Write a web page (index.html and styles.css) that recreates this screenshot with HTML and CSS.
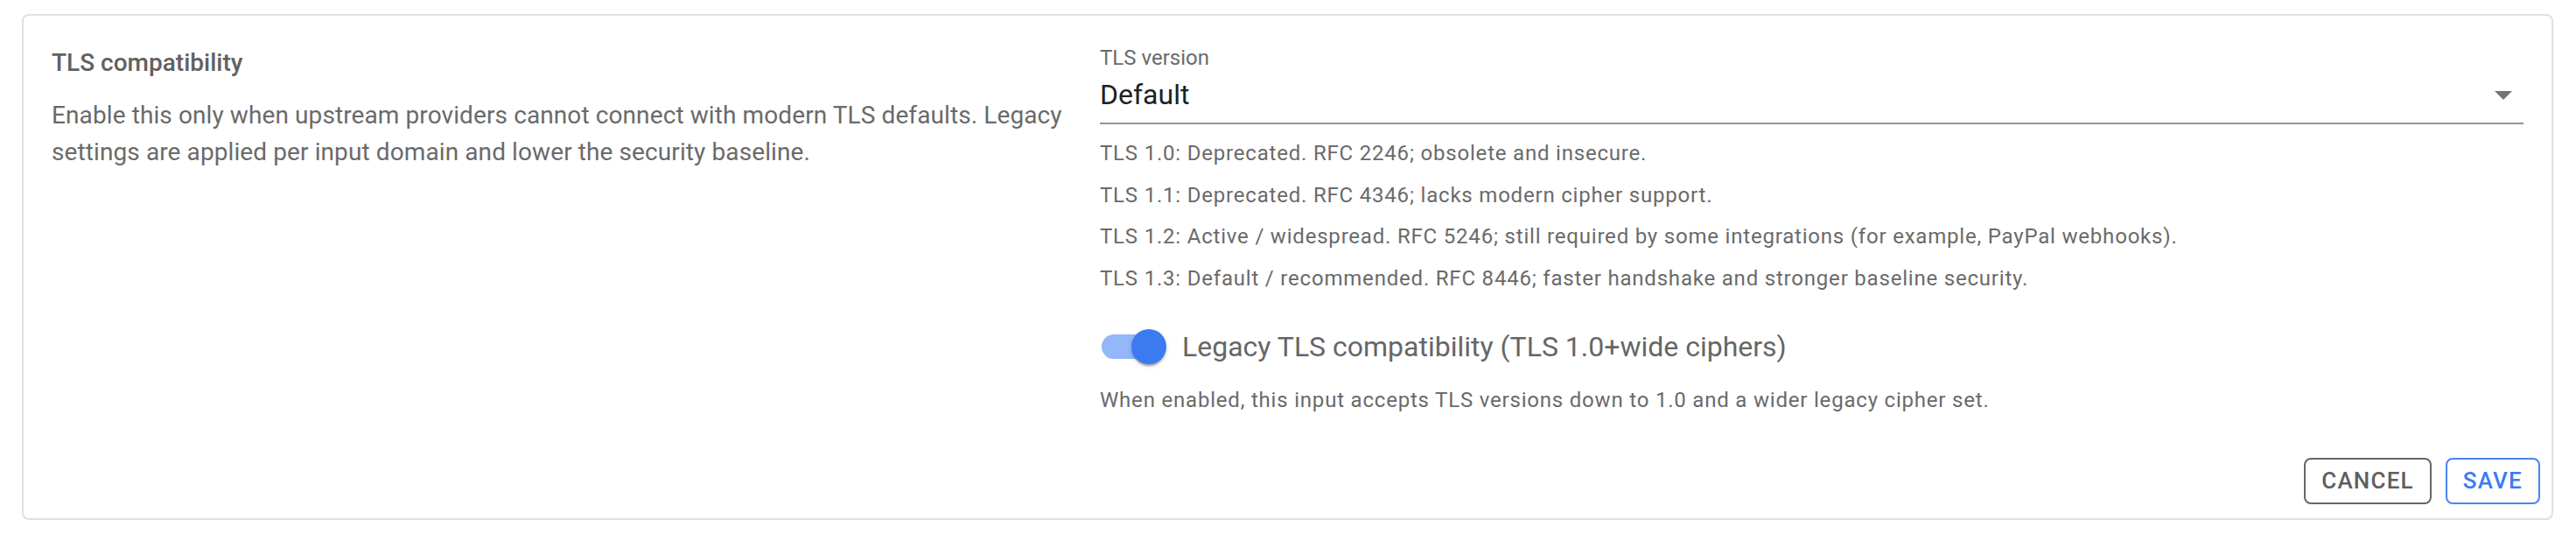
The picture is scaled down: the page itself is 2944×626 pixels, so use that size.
FILE: index.html
```html
<!DOCTYPE html>
<html lang="en">
<head>
  <meta charset="UTF-8" />
  <title>TLS compatibility</title>
  <link rel="stylesheet" href="styles.css">
</head>
<body>

<div class="card">
  <div class="card-content">
    <!-- Left: section intro -->
    <div class="intro">
      <div class="intro-title">TLS compatibility</div>
      <p class="intro-text">Enable this only when upstream providers cannot connect with modern TLS defaults. Legacy settings are applied per input domain and lower the security baseline.</p>
    </div>

    <!-- Right: the settings -->
    <div class="settings">
      <div class="field-label">TLS version</div>
      <div class="select">
        <span class="select-value">Default</span>
        <svg class="select-arrow" viewBox="0 0 24 24" width="48" height="48"><path d="M7 10l5 5 5-5z" fill="currentColor"/></svg>
      </div>

      <div class="helper-list">
        <div class="helper">TLS 1.0: Deprecated. RFC 2246; obsolete and insecure.</div>
        <div class="helper">TLS 1.1: Deprecated. RFC 4346; lacks modern cipher support.</div>
        <div class="helper">TLS 1.2: Active / widespread. RFC 5246; still required by some integrations (for example, PayPal webhooks).</div>
        <div class="helper">TLS 1.3: Default / recommended. RFC 8446; faster handshake and stronger baseline security.</div>
      </div>

      <label class="switch-row">
        <span class="switch">
          <span class="switch-track"></span>
          <span class="switch-thumb"></span>
        </span>
        <span class="switch-label">Legacy TLS compatibility (TLS 1.0+wide ciphers)</span>
      </label>
      <div class="helper switch-helper">When enabled, this input accepts TLS versions down to 1.0 and a wider legacy cipher set.</div>
    </div>
  </div>

  <div class="card-actions">
    <button class="btn btn-cancel">Cancel</button>
    <button class="btn btn-save">Save</button>
  </div>
</div>

</body>
</html>
```

FILE: styles.css
```css
body {
  margin: 16px 26px 0 25px;
  background: #fff;
  font-family: Roboto, "Noto Sans", sans-serif;
}
.card {
  border: 2px solid #e0e0e0;
  border-radius: 8px;
  background: #fff;
}
.card-content {
  display: grid;
  grid-template-columns: 1186px 1fr;
  column-gap: 12px;
  padding: 32px 32px 30px 32px;
}
.intro-title {
  font-size: 28px;
  font-weight: 500;
  line-height: 44px;
  color: #616161;
}
.intro-text {
  margin: 17px 0 0;
  font-size: 28px;
  line-height: 42px;
  letter-spacing: 0.1px;
  color: #6a6a6a;
}
.field-label {
  margin-top: 2px;
  font-size: 24px;
  line-height: 28px;
  color: #6a6a6a;
}
.select {
  display: flex;
  align-items: center;
  justify-content: space-between;
  margin-top: 4px;
  padding-bottom: 8px;
  border-bottom: 2px solid #949494;
}
.select-value {
  font-size: 32px;
  line-height: 46px;
  color: #212121;
}
.select-arrow {
  color: #757575;
  margin-right: -1px;
}
.helper-list {
  margin-top: 13px;
}
.helper {
  font-size: 24px;
  line-height: 40px;
  letter-spacing: 0.8px;
  color: #6a6a6a;
}
.helper + .helper {
  margin-top: 7.5px;
}
.switch-row {
  display: flex;
  align-items: center;
  margin: 20px 0 0 -22px;
}
.switch {
  position: relative;
  width: 116px;
  height: 76px;
  flex-shrink: 0;
}
.switch-track {
  position: absolute;
  left: 24px;
  top: 24px;
  width: 68px;
  height: 28px;
  border-radius: 14px;
  background: #3b7bf2;
  opacity: 0.55;
}
.switch-thumb {
  position: absolute;
  left: 58px;
  top: 18px;
  width: 40px;
  height: 40px;
  border-radius: 50%;
  background: #3b7bf2;
  box-shadow: 0 4px 2px -2px rgba(0,0,0,0.2), 0 2px 2px 0 rgba(0,0,0,0.14), 0 2px 6px 0 rgba(0,0,0,0.12);
}
.switch-label {
  font-size: 32px;
  line-height: 46px;
  color: #666;
}
.switch-helper {
  margin-top: 3px;
}
.card-actions {
  display: flex;
  justify-content: flex-end;
  gap: 16px;
  padding: 16px 13px 16px 16px;
}
.btn {
  font-family: Roboto, "Noto Sans", sans-serif;
  font-size: 26px;
  font-weight: 500;
  line-height: 37px;
  letter-spacing: 1.2px;
  text-transform: uppercase;
  padding: 6px 18px;
  border-radius: 8px;
  background: #fff;
  cursor: pointer;
}
.btn-cancel {
  color: #5f5f5f;
  border: 2px solid #666;
}
.btn-save {
  color: #3b7bf2;
  border: 2px solid #4a84f2;
}
```
